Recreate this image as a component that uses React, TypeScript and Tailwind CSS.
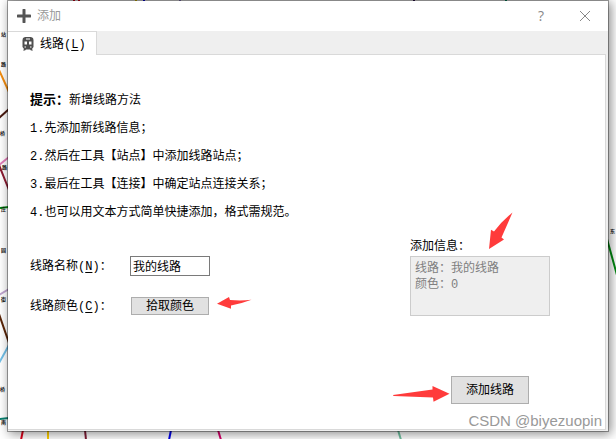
import { useState } from "react";
import type { ReactNode } from "react";

const tips = [
  "先添加新线路信息；",
  "然后在工具【站点】中添加线路站点；",
  "最后在工具【连接】中确定站点连接关系；",
  "也可以用文本方式简单快捷添加，格式需规范。",
];

// Pieces of the metro map that stick out around the dialog
const mapLines = [
  { d: "M-1 70L9 92", color: "#f28c0f" },
  { d: "M-1 118L9 109", color: "#4a1a10" },
  { d: "M-1 165L9 157", color: "#e27db8" },
  { d: "M-1 165L9 190", color: "#8b1a30" },
  { d: "M-1 208L9 207", color: "#008a10" },
  { d: "M-1 295L9 289", color: "#c0a5d0" },
  { d: "M-1 314L9 343", color: "#5a2508" },
  { d: "M-1 363L9 345", color: "#72c0e8" },
  { d: "M-1 419L9 418", color: "#0a8070" },
  { d: "M23 430L21 440", color: "#e2001a" },
  { d: "M48 430L48 440", color: "#ffd000" },
  { d: "M85 430L86 440", color: "#801c35" },
  { d: "M171 430L169 440", color: "#0000f0" },
  { d: "M218 430L221 440", color: "#d8006a" },
  { d: "M398 430L401 440", color: "#70c0a0" },
  { d: "M607 239L617 275", color: "#008a10" },
  { d: "M74 -1L74 2M79 -1L79 2", color: "#e2001a" },
  { d: "M136 -1L136 2", color: "#e0c000" },
  { d: "M144 -1L144 2", color: "#0000f0" },
  { d: "M180 -1L180 2", color: "#9080c0" },
  { d: "M414 -1L414 2", color: "#301050" },
  { d: "M506 -1L506 2", color: "#008a60" },
];

const mapLabels = [
  { x: 1, y: 36, text: "站" },
  { x: 1, y: 66, text: "路" },
  { x: 0, y: 135, text: "桥" },
  { x: 2, y: 169, text: "路" },
  { x: 1, y: 211, text: "庄" },
  { x: 1, y: 252, text: "园" },
  { x: 1, y: 301, text: "街" },
  { x: 0, y: 391, text: "桥" },
  { x: 1, y: 424, text: "南" },
  { x: 610, y: 233, text: "东" },
];

function MetroMap() {
  return (
    <svg
      className="absolute left-0 top-0"
      width="616"
      height="439"
      fill="none"
      aria-hidden="true"
    >
      {mapLines.map((line) => (
        <path key={line.d} d={line.d} stroke={line.color} strokeWidth="2" />
      ))}
      {mapLabels.map((label) => (
        <text
          key={label.y}
          x={label.x}
          y={label.y}
          fontSize="5"
          fontWeight="bold"
          fill="#111"
        >
          {label.text}
        </text>
      ))}
    </svg>
  );
}

function TrainIcon() {
  return (
    <svg width="12" height="14" viewBox="0 0 12 14" aria-hidden="true">
      <path
        fill="#505050"
        fillRule="evenodd"
        d="M3 0h6l2 1 .5 2v7L10 12l1 1.500H9L8 12.500H4l-1 1H1L2 12 .5 10V3L1 1zM4 1.500v1h4v-1zM2.500 4.500v3h2.500v-3zM7 4.500v3h2.500v-3zM2.500 9.500v1H4v-1zM8 9.500v1h1.500v-1z"
      />
    </svg>
  );
}

function Hotkey({ children }: { children: ReactNode }) {
  return (
    <>
      (<span className="underline underline-offset-2">{children}</span>)
    </>
  );
}

export default function App() {
  const [name, setName] = useState("我的线路");

  return (
    <div className="relative flex min-h-screen flex-col overflow-hidden bg-white px-[7px] pb-[7px] font-['Liberation_Mono','Noto_Sans_CJK_SC',monospace] text-xs text-black">
      <MetroMap />

      <div className="relative flex flex-1 flex-col border border-black/35 bg-[#efefef] bg-clip-padding shadow-[2px_2px_10px_rgba(0,0,0,0.45)]">
        <header className="flex h-[30px] items-center bg-white pl-[9px] pr-[17px] text-[#999]">
          <svg width="14" height="14" viewBox="0 0 14 14" aria-hidden="true">
            <path
              d="M7 1v12M1 7h12"
              stroke="#555"
              strokeWidth="3"
              strokeLinecap="round"
            />
          </svg>
          <h1 className="ml-1.5 flex-1 pt-0.5">添加</h1>
          <button
            className="mr-8 w-3 font-['Open_Sans',sans-serif] text-sm leading-none text-[#888]"
            aria-label="帮助"
          >
            ?
          </button>
          <button aria-label="关闭">
            <svg width="12" height="12" viewBox="0 0 12 12">
              <path d="M1 1l10 10M11 1L1 11" stroke="#888" strokeWidth="1" />
            </svg>
          </button>
        </header>

        <nav className="flex">
          <button className="-mb-px flex h-[25px] items-center gap-1.5 border-t border-r border-[#d9d9d9] bg-white pl-3.5 pr-2.5">
            <TrainIcon />
            <span className="pt-0.5">
              线路
              <Hotkey>L</Hotkey>
            </span>
          </button>
          <div className="h-6 flex-1 border-b border-[#d9d9d9] mr-0.5" />
        </nav>

        <main className="mr-0.5 mb-px flex-1 border-r border-b border-[#d9d9d9] bg-white pl-[22px] pr-[55px] pt-8 pb-5">
          <p className="leading-7">
            <b className="text-[13px]">提示：</b>新增线路方法
          </p>
          <ol>
            {tips.map((tip, i) => (
              <li key={tip} className="leading-7">
                {i + 1}.{tip}
              </li>
            ))}
          </ol>

          <div className="flex justify-between pt-3">
            <form className="pt-[17px]">
              <div className="flex items-center">
                <label htmlFor="line-name" className="w-[100px] pt-0.5">
                  线路名称
                  <Hotkey>N</Hotkey>：
                </label>
                <input
                  id="line-name"
                  className="h-5 w-20 border border-[#7a7a7a] bg-white px-0.5 outline-none"
                  value={name}
                  onChange={(e) => setName(e.target.value)}
                />
              </div>
              <div className="mt-5 flex items-center">
                <label htmlFor="line-color" className="w-[100px] pt-0.5">
                  线路颜色
                  <Hotkey>C</Hotkey>：
                </label>
                <div className="relative flex w-20 justify-center py-px">
                  <button
                    id="line-color"
                    type="button"
                    className="h-[18px] w-[78px] border border-[#adadad] bg-[#e1e1e1] pt-px leading-4"
                  >
                    拾取颜色
                  </button>
                  <svg
                    className="absolute -right-[42px] top-0"
                    width="35"
                    height="14"
                    viewBox="0 0 35 14"
                    aria-hidden="true"
                  >
                    <path
                      d="M0 7.7L12 1L13 4Q24 5 34.500 3.800Q25 7.500 14 9.500L14 12.700Z"
                      fill="#ff3b3b"
                    />
                  </svg>
                </div>
              </div>
            </form>

            <div className="relative w-[140px]">
              <label htmlFor="line-info" className="block pb-px">
                添加信息：
              </label>
              <textarea
                id="line-info"
                readOnly
                className="block h-[60px] w-full resize-none border border-[#ccc] bg-[#efefef] px-1 py-1 leading-4 text-[#808080] outline-none"
                value={`线路：${name}\n颜色：0`}
              />
              <svg
                className="absolute -top-7 left-[78px]"
                width="26"
                height="39"
                viewBox="0 0 26 39"
                aria-hidden="true"
              >
                <path
                  d="M1 38L3 18.700L6 20.500Q14 10 24.500 1.500Q19 14 13.500 26.500L16 28.500Z"
                  fill="#ff3b3b"
                />
              </svg>
            </div>
          </div>

          <div className="mt-15 flex justify-end pr-[21px]">
            <div className="relative">
              <button className="h-7 w-[78px] border border-[#adadad] bg-[#e1e1e1] pt-0.5">
                添加线路
              </button>
              <svg
                className="absolute right-[79px] top-2"
                width="57"
                height="20"
                viewBox="0 0 57 20"
                aria-hidden="true"
              >
                <path
                  d="M56.500 9.700L39.500 2L39.500 5.500L0 11Q0 12 1 12L40 13.500L40.500 17.700Z"
                  fill="#ff3b3b"
                />
              </svg>
            </div>
          </div>
        </main>
      </div>

      <span className="absolute bottom-1.5 right-3.5 font-['Liberation_Sans',sans-serif] text-[15px] leading-6 text-[#999]">
        CSDN @biyezuopin
      </span>
    </div>
  );
}
